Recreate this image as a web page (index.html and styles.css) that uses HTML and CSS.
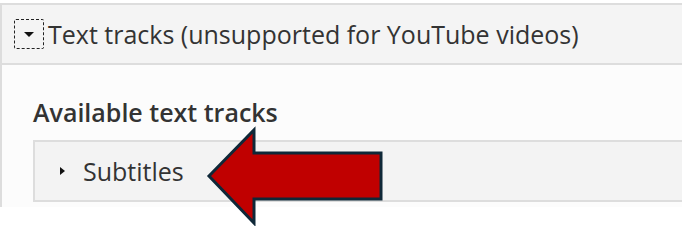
FILE: index.html
```html
<!DOCTYPE html>
<html lang="en">
<head>
    <meta charset="UTF-8">
    <title>Text tracks</title>
    <link rel="stylesheet" href="styles.css">
</head>
<body>
    <div class="panel">
        <div class="panel-header">
            <span class="toggle-icon"><span class="caret-down"></span></span>
            <span class="panel-title">Text tracks (unsupported for YouTube videos)</span>
        </div>
        <div class="panel-body">
            <div class="section-title">Available text tracks</div>
            <div class="track-group">
                <span class="caret-right"></span>
                <span class="track-label">Subtitles</span>
            </div>
        </div>
    </div>

    <!-- callout arrow -->
    <svg class="callout-arrow" width="190" height="104" viewBox="0 0 190 104">
        <polygon points="4,51 49,5 49,28 176,28 176,74 49,74 49,98"
                 fill="#c00000" stroke="#0f2838" stroke-width="3" stroke-linejoin="miter"/>
    </svg>
</body>
</html>
```

FILE: styles.css
```css
body {
    font-family: 'Open Sans', 'Noto Sans', sans-serif;
    margin: 0;
    padding: 3px 0 0 0;
    background-color: #ffffff;
    color: #333333;
    width: 682px;
    height: 223px;
    overflow: hidden;
    position: relative;
}
.panel {
    border-top: 2px solid #dddddd;
    border-left: 2px solid #dddddd;
}
.panel-header {
    height: 58px;
    background-color: #f4f4f4;
    border-bottom: 2px solid #dddddd;
    display: flex;
    align-items: center;
    padding-left: 12px;
    font-size: 25px;
}
.toggle-icon {
    width: 28px;
    height: 28px;
    border: 1.5px dashed #222222;
    border-radius: 2px;
    display: flex;
    justify-content: center;
    align-items: center;
    margin-right: 4px;
}
.caret-down {
    width: 0;
    height: 0;
    border-left: 5px solid transparent;
    border-right: 5px solid transparent;
    border-top: 5px solid #111111;
}
.panel-title {
    line-height: 32px;
}
.panel-body {
    background-color: #fcfcfc;
    padding: 30px 0 5px 31px;
}
.section-title {
    font-size: 25px;
    font-weight: 600;
    line-height: 34px;
    margin-bottom: 11px;
}
.track-group {
    height: 58px;
    background-color: #f3f3f3;
    border: 2px solid #dddddd;
    border-right: none;
    display: flex;
    align-items: center;
    padding-left: 25px;
    font-size: 25px;
}
.caret-right {
    width: 0;
    height: 0;
    border-top: 4px solid transparent;
    border-bottom: 4px solid transparent;
    border-left: 5px solid #111111;
    margin-right: 18px;
}
.callout-arrow {
    position: absolute;
    left: 205px;
    top: 125px;
}
```
